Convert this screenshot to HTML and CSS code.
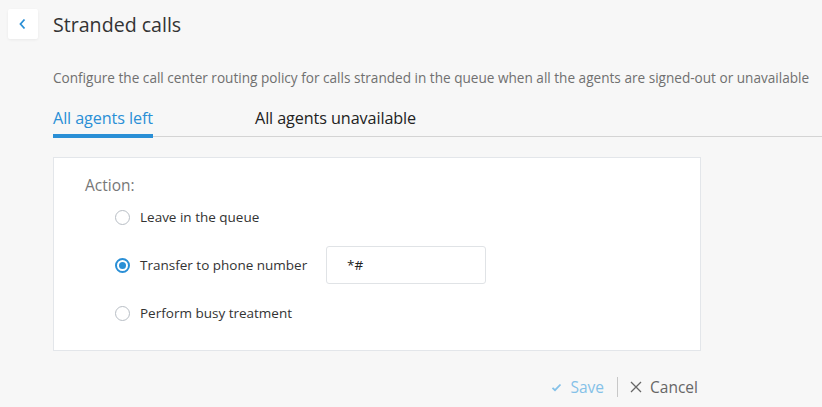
FILE: index.html
```html
<!DOCTYPE html>
<html lang="en">
<head>
    <meta charset="UTF-8">
    <meta name="viewport" content="width=device-width, initial-scale=1.0">
    <title>Stranded calls</title>
    <link rel="stylesheet" href="styles.css">
</head>
<body>
    <div id="page">
        <div id="header">
            <button class="backButton" aria-label="Back">
                <svg width="10" height="12" viewBox="0 0 10 12"><path d="M6.5 1.5 L2.5 6 L6.5 10.5" fill="none" stroke="#2a8fd6" stroke-width="1.8"/></svg>
            </button>
            <h1>Stranded calls</h1>
        </div>

        <div id="content">
            <p class="description">Configure the call center routing policy for calls stranded in the queue when all the agents are signed-out or unavailable</p>

            <div id="tabs">
                <div class="tab active">All agents left</div>
                <div class="tab">All agents unavailable</div>
            </div>

            <div id="card">
                <div class="actionLabel">Action:</div>
                <div class="options">
                    <label class="option">
                        <span class="radio"></span>
                        <span>Leave in the queue</span>
                    </label>
                    <label class="option">
                        <span class="radio checked"></span>
                        <span class="optionText">Transfer to phone number</span>
                        <input class="phoneInput" type="text" value="*#">
                    </label>
                    <label class="option">
                        <span class="radio"></span>
                        <span>Perform busy treatment</span>
                    </label>
                </div>
            </div>

            <div id="actions">
                <span class="saveButton">
                    <svg width="11" height="9" viewBox="0 0 11 9"><path d="M1.5 4.8 L4 7.2 L9.5 1.5" fill="none" stroke="#84c1e8" stroke-width="1.8"/></svg>
                    Save
                </span>
                <span class="divider"></span>
                <span class="cancelButton">
                    <svg width="12" height="12" viewBox="0 0 12 12"><path d="M1 1 L11 11 M11 1 L1 11" fill="none" stroke="#666" stroke-width="1.3"/></svg>
                    Cancel
                </span>
            </div>
        </div>
    </div>
</body>
</html>
```

FILE: styles.css
```css
body {
    font-family: "Open Sans", "Noto Sans", sans-serif;
    margin: 0;
    background-color: #f7f7f7;
    color: #333;
}

#page {
    width: 822px;
    height: 407px;
    overflow: hidden;
}

#header {
    display: flex;
    align-items: center;
    padding: 9px 0 0 8px;
    height: 30px;
}

.backButton {
    width: 30px;
    height: 30px;
    border: none;
    border-radius: 2px;
    background-color: #fff;
    box-shadow: 0 1px 3px rgba(0, 0, 0, 0.06);
    display: flex;
    align-items: center;
    justify-content: center;
    padding: 0;
    margin-right: 15px;
}

#header h1 {
    font-size: 19.6px;
    font-weight: 400;
    margin: 0;
    color: #333;
}

#content {
    padding-left: 53px;
}

.description {
    margin: 30px 0 0 0;
    font-size: 13.6px;
    color: #707070;
    line-height: 18px;
    white-space: nowrap;
}

#tabs {
    display: flex;
    margin-top: 21px;
    border-bottom: 1px solid #d4d4d4;
}

.tab {
    font-size: 16.2px;
    line-height: 20px;
    padding-bottom: 8px;
    color: #222;
    margin-right: 102px;
    letter-spacing: -0.1px;
}

.tab.active {
    color: #2a8fd6;
    box-shadow: inset 0 -4px 0 #2a8fd6;
    margin-bottom: -2px;
    padding-bottom: 10px;
}

#card {
    width: 648px;
    height: 194px;
    box-sizing: border-box;
    margin-top: 20px;
    background-color: #fff;
    border: 1px solid #e3e6ea;
    padding: 18px 0 0 31px;
}

.actionLabel {
    font-size: 15.5px;
    color: #777;
    line-height: 18px;
}

.options {
    margin-left: 30px;
    margin-top: 13px;
}

.option {
    display: flex;
    align-items: center;
    font-size: 13.5px;
    color: #333;
    height: 20px;
    margin-bottom: 28px;
}

.option:nth-child(2) {
    height: 38px;
    margin-top: -9px;
    margin-bottom: 19px;
}

.radio {
    width: 13px;
    height: 13px;
    border: 1px solid #b8bec5;
    border-radius: 50%;
    margin-right: 10px;
    flex-shrink: 0;
    box-sizing: content-box;
}

.radio.checked {
    border: 2px solid #2a8fd6;
    width: 11px;
    height: 11px;
    position: relative;
}

.radio.checked::after {
    content: "";
    position: absolute;
    left: 2px;
    top: 2px;
    width: 7px;
    height: 7px;
    border-radius: 50%;
    background-color: #2a8fd6;
}

.optionText {
    width: 186px;
}

.phoneInput {
    width: 160px;
    height: 38px;
    box-sizing: border-box;
    border: 1px solid #e0e3e6;
    border-radius: 3px;
    padding: 0 0 0 20px;
    font-family: "Open Sans", "Noto Sans", sans-serif;
    font-size: 13.5px;
    color: #222;
    outline: none;
}

#actions {
    display: flex;
    align-items: center;
    justify-content: flex-end;
    width: 645px;
    margin-top: 25px;
    font-size: 15.5px;
}

.saveButton {
    color: #84c1e8;
    display: flex;
    align-items: center;
    gap: 9px;
}

.divider {
    width: 1px;
    height: 20px;
    background-color: #c8c8c8;
    margin: 0 12px 0 13px;
}

.cancelButton {
    color: #666;
    display: flex;
    align-items: center;
    gap: 8px;
}
```
